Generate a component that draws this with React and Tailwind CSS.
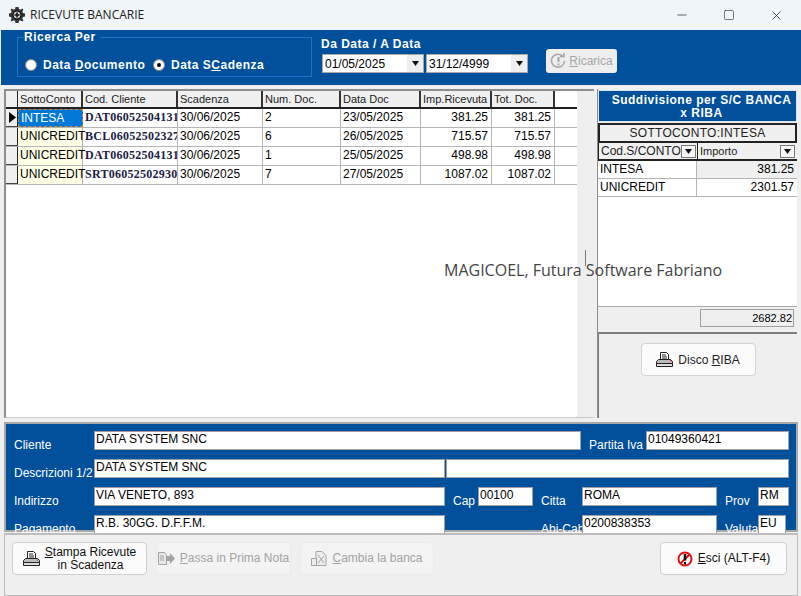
import { Minus, Square, X } from 'lucide-react';

const rows = [
  { conto: 'INTESA', cod: 'DAT06052504131', scad: '30/06/2025', num: '2', data: '23/05/2025', imp: '381.25', tot: '381.25' },
  { conto: 'UNICREDIT', cod: 'BCL06052502327', scad: '30/06/2025', num: '6', data: '26/05/2025', imp: '715.57', tot: '715.57' },
  { conto: 'UNICREDIT', cod: 'DAT06052504131', scad: '30/06/2025', num: '1', data: '25/05/2025', imp: '498.98', tot: '498.98' },
  { conto: 'UNICREDIT', cod: 'SRT06052502930', scad: '30/06/2025', num: '7', data: '27/05/2025', imp: '1087.02', tot: '1087.02' },
];

const headers = [
  { label: 'SottoConto', w: 'w-[65px]' },
  { label: 'Cod. Cliente', w: 'w-[95px]' },
  { label: 'Scadenza', w: 'w-[85px]' },
  { label: 'Num. Doc.', w: 'w-[78px]' },
  { label: 'Data Doc', w: 'w-[80px]' },
  { label: 'Imp.Ricevuta', w: 'w-[71px]' },
  { label: 'Tot. Doc.', w: 'w-[63px]' },
];

const Arrow = () => (
  <svg width="9" height="5" viewBox="0 0 9 5" className="shrink-0">
    <path d="M1 0h7L4.5 5z" fill="#111" />
  </svg>
);

const PrinterIcon = ({ className = '' }) => (
  <svg width="17" height="17" viewBox="0 0 17 17" className={className}>
    <path d="M4.5 1.5h6l2 2v6h-8z" fill="#fff" stroke="#222" />
    <path d="M6 4h4M6 6h5M6 8h5" stroke="#222" />
    <path d="M.5 10.5l2-2h12l2 2v2H.5z" fill="#bbb" stroke="#222" />
    <path d="M.5 12.5h16v3H.5z" fill="#ddd" stroke="#222" />
    <path d="M14 10h1" stroke="#e11" />
  </svg>
);

const GearIcon = () => (
  <svg width="16" height="16" viewBox="0 0 16 16">
    <path d="M6.5 0h3l.4 2 1.6.7L13.200 1.600l1.200 1.200-1.100 1.700.7 1.500 2 .5v3l-2 .4-.7 1.600 1.100 1.700-1.200 1.200-1.700-1.100-1.600.7-.4 2h-3l-.4-2-1.600-.7-1.700 1.100-1.200-1.200 1.100-1.700-.7-1.600-2-.4v-3l2-.5.7-1.500-1.100-1.700 1.200-1.200 1.700 1.100 1.600-.7z" fill="#333" />
    <circle cx="8" cy="8" r="4" fill="#ccc" stroke="#111" />
    <path d="M8 5.500v5M5.500 8h5" stroke="#111" strokeWidth="1.500" />
  </svg>
);

const Radio = ({ checked }) => (
  <span className="w-[12px] h-[12px] rounded-full bg-white border border-[#8a8a8a] flex items-center justify-center shrink-0">
    {checked && <span className="w-[4px] h-[4px] rounded-full bg-black"></span>}
  </span>
);

const DateBox = ({ value, w }) => (
  <div className={`${w} h-[19px] bg-white border border-[#a9a9a9] flex items-center text-[12px] text-black pl-[2px]`}>
    <span className="flex-1">{value}</span>
    <span className="w-[16px] h-full bg-[#efefef] flex items-center justify-center">
      <Arrow />
    </span>
  </div>
);

const Field = ({ w, ml = '', children }) => (
  <div className={`${w} ${ml} h-[19px] bg-white border border-[#a0a0a0] text-[12px] leading-[15px] text-black pl-[1px] truncate`}>
    {children}
  </div>
);

const Label = ({ w, children }) => (
  <span className={`${w} text-[12px] text-white pt-[5px] pl-[0px] whitespace-nowrap`}>{children}</span>
);

const ActionButton = ({ w, ml = '', disabled, children }) => (
  <button
    className={`${w} ${ml} h-[33px] rounded-[4px] flex items-center justify-center gap-[5px] text-[12px] leading-[13px] ${
      disabled ? 'bg-[#f3f3f3] border border-[#ebebeb] text-[#a3a3a3]' : 'bg-[#fbfbfb] border border-[#cfcfcf] text-[#111]'
    }`}
  >
    {children}
  </button>
);

export default function App() {
  return (
    <div className="w-[801px] h-[596px] overflow-hidden flex flex-col bg-[#efefef] font-['Liberation_Sans',sans-serif] text-[12px] text-black">
      {/* Title bar */}
      <div className="h-[30px] bg-[#eff5f8] flex items-center shrink-0">
        <div className="ml-[9px] flex items-center gap-[5px]">
          <GearIcon />
          <span className="text-[12px] text-[#222] font-['Open_Sans',sans-serif]">RICEVUTE BANCARIE</span>
        </div>
        <div className="ml-auto flex items-center gap-[34px] pr-[17px] text-[#222]">
          <Minus size={14} strokeWidth={1.2} />
          <Square size={12} strokeWidth={1.2} />
          <X size={15} strokeWidth={1.2} />
        </div>
      </div>

      {/* Search bar */}
      <div className="h-[55px] ml-px bg-[#00509b] flex shrink-0 text-white">
        <fieldset className="ml-[16px] mt-[1px] w-[295px] h-[46px] border border-[#1b74c9] px-[6px]">
          <legend className="font-bold text-[12px] leading-[13px] tracking-[0.5px] px-0 pr-[4px]">Ricerca Per</legend>
          <div className="flex items-center mt-[12px] ml-[1px] font-bold text-[12px] tracking-[0.5px]">
            <Radio />
            <span className="ml-[6px] w-[110px] whitespace-nowrap">Data <u>D</u>ocumento</span>
            <Radio checked />
            <span className="ml-[6px] whitespace-nowrap">Data S<u>C</u>adenza</span>
          </div>
        </fieldset>
        <div className="ml-[9px] mt-[7px] flex flex-col">
          <span className="font-bold text-[12px] leading-[15px] tracking-[0.5px]">Da Data / A Data</span>
          <div className="flex gap-[2px] mt-[2px] ml-[1px]">
            <DateBox value="01/05/2025" w="w-[102px]" />
            <DateBox value="31/12/4999" w="w-[102px]" />
          </div>
        </div>
        <button className="ml-[18px] mt-[19px] w-[71px] h-[24px] rounded-[3px] bg-[#eeeeee] text-[#a6a6a6] flex items-center justify-center gap-[3px] text-[12px]">
          <svg width="16" height="16" viewBox="0 0 16 16" fill="none" stroke="#a6a6a6" strokeWidth="1.500">
            <path d="M13 3.500A6.500 6.500 0 1 0 14.500 8" />
            <path d="M10 3.500h4V0" />
            <path d="M8.500 4v5M8.500 10.500v2" strokeWidth="2" />
          </svg>
          <span><u>R</u>icarica</span>
        </button>
      </div>

      {/* Grid + side panel */}
      <div className="h-[334px] mt-[4px] flex shrink-0 relative">
        <div className="ml-[4px] w-[590px] h-[329px] bg-white border-t-2 border-l-2 border-[#8e8e8e] border-b border-b-[#c8c8c8] flex">
          <div className="w-[571px]">
            <div className="flex h-[18px] border-b-2 border-[#222]">
              <div className="w-[12px] bg-[#efefef] border-r border-[#222]"></div>
              {headers.map((h) => (
                <div key={h.label} className={`${h.w} bg-[#f0f0f0] border-r-2 border-[#333] pl-[2px] text-[11px] leading-[17px] text-[#222] whitespace-nowrap overflow-hidden`}>
                  {h.label}
                </div>
              ))}
            </div>
            {rows.map((r, i) => (
              <div key={i} className="flex h-[19px] border-b border-[#b5b5b5] text-[12px] leading-[17px]">
                <div className="w-[12px] bg-[#efefef] border-r border-[#222] border-b border-b-[#444] flex items-center">
                  {i === 0 && (
                    <svg width="7" height="11" viewBox="0 0 7 11" className="ml-[3px]">
                      <path d="M0 0l7 5.500L0 11z" fill="#000" />
                    </svg>
                  )}
                </div>
                <div className={`w-[65px] pl-[2px] border-r border-[#b5b5b5] ${i === 0 ? 'bg-[#0078d7] text-white border border-dashed border-[#d9822b]' : 'bg-[#ffffe6]'}`}>
                  {r.conto}
                </div>
                <div className="w-[95px] pl-[2px] border-r border-[#b5b5b5] font-['Liberation_Serif',serif] font-bold text-[12px] tracking-[0.25px] text-[#1c1c44] whitespace-nowrap overflow-hidden">
                  {r.cod}
                </div>
                <div className="w-[85px] pl-[2px] border-r border-[#b5b5b5]">{r.scad}</div>
                <div className="w-[78px] pl-[2px] border-r border-[#b5b5b5]">{r.num}</div>
                <div className="w-[80px] pl-[2px] border-r border-[#b5b5b5]">{r.data}</div>
                <div className="w-[71px] pr-[3px] text-right border-r border-[#b5b5b5]">{r.imp}</div>
                <div className="w-[63px] pr-[3px] text-right border-r border-[#b5b5b5]">{r.tot}</div>
              </div>
            ))}
          </div>
          <div className="w-[17px] ml-auto bg-[#efefef]"></div>
        </div>

        <div className="ml-[3px] w-[200px] h-[329px] flex flex-col border-l border-[#8e8e8e]">
          <div className="h-[32px] mt-px bg-[#00509b] text-white font-bold text-[12px] leading-[13px] tracking-[0.5px] text-center pt-[3px] pl-[8px] border border-[#d8e4ee]">
            Suddivisione per S/C BANCA<br />x RIBA
          </div>
          <div className="h-[20px] mt-[1px] bg-[#f0f0f0] border-2 border-b-2 border-[#222] text-center text-[12px] leading-[16px] tracking-[0.3px] text-[#222]">
            SOTTOCONTO:INTESA
          </div>
          <div className="h-[18px] flex bg-[#f0f0f0] border-l border-b-2 border-[#222] text-[12px] text-[#222]">
            <div className="w-[99px] flex items-center pl-[2px] border-r border-[#222]">
              <span className="flex-1">Cod.S/CONTO</span>
              <span className="w-[15px] h-[13px] mr-[1px] border border-[#777] bg-[#f5f5f5] flex items-center justify-center"><Arrow /></span>
            </div>
            <div className="flex-1 flex items-center pl-[2px]">
              <span className="flex-1 text-[11px]">Importo</span>
              <span className="w-[15px] h-[13px] mr-[2px] border border-[#777] bg-[#f5f5f5] flex items-center justify-center"><Arrow /></span>
            </div>
          </div>
          <div className="flex-1 bg-white">
            <div className="flex h-[18px] border-b border-[#b5b5b5] leading-[17px]">
              <div className="w-[99px] pl-[2px] border-r border-[#b5b5b5]">INTESA</div>
              <div className="flex-1 bg-[#efefef] text-right pr-[3px]">381.25</div>
            </div>
            <div className="flex h-[18px] border-b border-[#b5b5b5] leading-[17px]">
              <div className="w-[99px] pl-[2px] border-r border-[#b5b5b5]">UNICREDIT</div>
              <div className="flex-1 text-right pr-[3px]">2301.57</div>
            </div>
          </div>
          <div className="h-[25px] bg-[#efefef] border-t border-[#a8a8a8] flex items-start justify-end pr-[3px] pt-[2px]">
            <div className="w-[94px] h-[18px] border border-[#a0a0a0] text-right pr-[1px] text-[11px] leading-[17px]">2682.82</div>
          </div>
          <div className="h-[86px] mt-[1px] bg-[#efefef] border-t-2 border-t-[#7d7d7d] border-l border-l-[#7d7d7d] flex justify-center pt-[9px]">
            <button className="w-[115px] h-[33px] rounded-[4px] bg-[#fbfbfb] border border-[#d4d4d4] flex items-center justify-center gap-[5px] text-[12px] text-[#222]">
              <PrinterIcon />
              <span>Disco <u>R</u>IBA</span>
            </button>
          </div>
        </div>

        {/* Watermark */}
        <span className="absolute left-[444px] top-[170px] text-[16px] leading-[22px] text-[#444] font-['Open_Sans',sans-serif] whitespace-nowrap">
          MAGICOEL, Futura Software Fabriano
        </span>
        <span className="absolute left-[585px] top-[161px] w-px h-[16px] bg-[#777]"></span>
      </div>

      {/* Customer panel */}
      <div className="ml-[4px] mt-[-1px] w-[794px] h-[110px] bg-[#00509b] border-2 border-[#a8a8a8] pt-[7px] pl-[8px] flex flex-col gap-[5px] shrink-0">
        <div className="flex">
          <Label w="w-[80px]">Cliente</Label>
          <Field w="w-[487px]">DATA SYSTEM SNC</Field>
          <span className="ml-[8px]"><Label w="w-[57px] inline-block">Partita Iva</Label></span>
          <Field w="w-[143px]">01049360421</Field>
        </div>
        <div className="flex">
          <Label w="w-[80px]">Descrizioni 1/2</Label>
          <Field w="w-[351px]">DATA SYSTEM SNC</Field>
          <Field w="w-[343px]" ml="ml-px"></Field>
        </div>
        <div className="flex">
          <Label w="w-[80px]">Indirizzo</Label>
          <Field w="w-[351px]">VIA VENETO, 893</Field>
          <span className="ml-[8px]"><Label w="w-[25px] inline-block">Cap</Label></span>
          <Field w="w-[55px]">00100</Field>
          <span className="ml-[8px]"><Label w="w-[41px] inline-block">Citta</Label></span>
          <Field w="w-[135px]">ROMA</Field>
          <span className="ml-[8px]"><Label w="w-[33px] inline-block">Prov</Label></span>
          <Field w="w-[31px]">RM</Field>
        </div>
        <div className="flex">
          <Label w="w-[80px]">Pagamento</Label>
          <Field w="w-[351px]">R.B. 30GG. D.F.F.M.</Field>
          <span className="ml-[96px]"><Label w="w-[41px] inline-block">Abi-Cab</Label></span>
          <Field w="w-[135px]">0200838353</Field>
          <span className="ml-[8px]"><Label w="w-[33px] inline-block">Valuta</Label></span>
          <Field w="w-[28px]">EU</Field>
        </div>
      </div>

      {/* Action buttons */}
      <div className="flex-1 ml-[4px] mt-px w-[794px] border-t-2 border-x border-[#bdbdbd] border-b flex pl-[7px] pt-[7px]">
        <ActionButton w="w-[135px]">
          <PrinterIcon />
          <span className="text-center">
            <u>S</u>tampa Ricevute<br />in Scadenza
          </span>
        </ActionButton>
        <ActionButton w="w-[135px]" ml="ml-[9px]" disabled>
          <svg width="17" height="15" viewBox="0 0 17 15">
            <path d="M.5 1.500h6l2 2v10h-8z" fill="#e6e6e6" stroke="#a3a3a3" />
            <path d="M8 5h4V2l5 5.500-5 5.500V10H8z" fill="#a3a3a3" />
            <path d="M2 5h4M2 7h4M2 9h4" stroke="#a3a3a3" />
          </svg>
          <span><u>P</u>assa in Prima Nota</span>
        </ActionButton>
        <ActionButton w="w-[134px]" ml="ml-[9px]" disabled>
          <svg width="16" height="16" viewBox="0 0 16 16" fill="none" stroke="#a3a3a3">
            <path d="M5 .500h6l4 4v10H5z" fill="#ececec" />
            <path d="M.500 7.500h5v7h-5z" fill="#ececec" />
            <path d="M7 4l6 8M13 5l-6 7" />
          </svg>
          <span><u>C</u>ambia la banca</span>
        </ActionButton>
        <ActionButton w="w-[127px]" ml="ml-[226px]">
          <svg width="16" height="16" viewBox="0 0 16 16">
            <circle cx="8" cy="8" r="6.500" fill="#fff" stroke="#e01010" strokeWidth="2" />
            <path d="M3.500 12.500l9-9" stroke="#e01010" strokeWidth="2" />
            <path d="M8 3v6.500" stroke="#111" strokeWidth="2.500" />
            <path d="M8 11v2.500" stroke="#111" strokeWidth="2" />
          </svg>
          <span><u>E</u>sci (ALT-F4)</span>
        </ActionButton>
      </div>
    </div>
  );
}
